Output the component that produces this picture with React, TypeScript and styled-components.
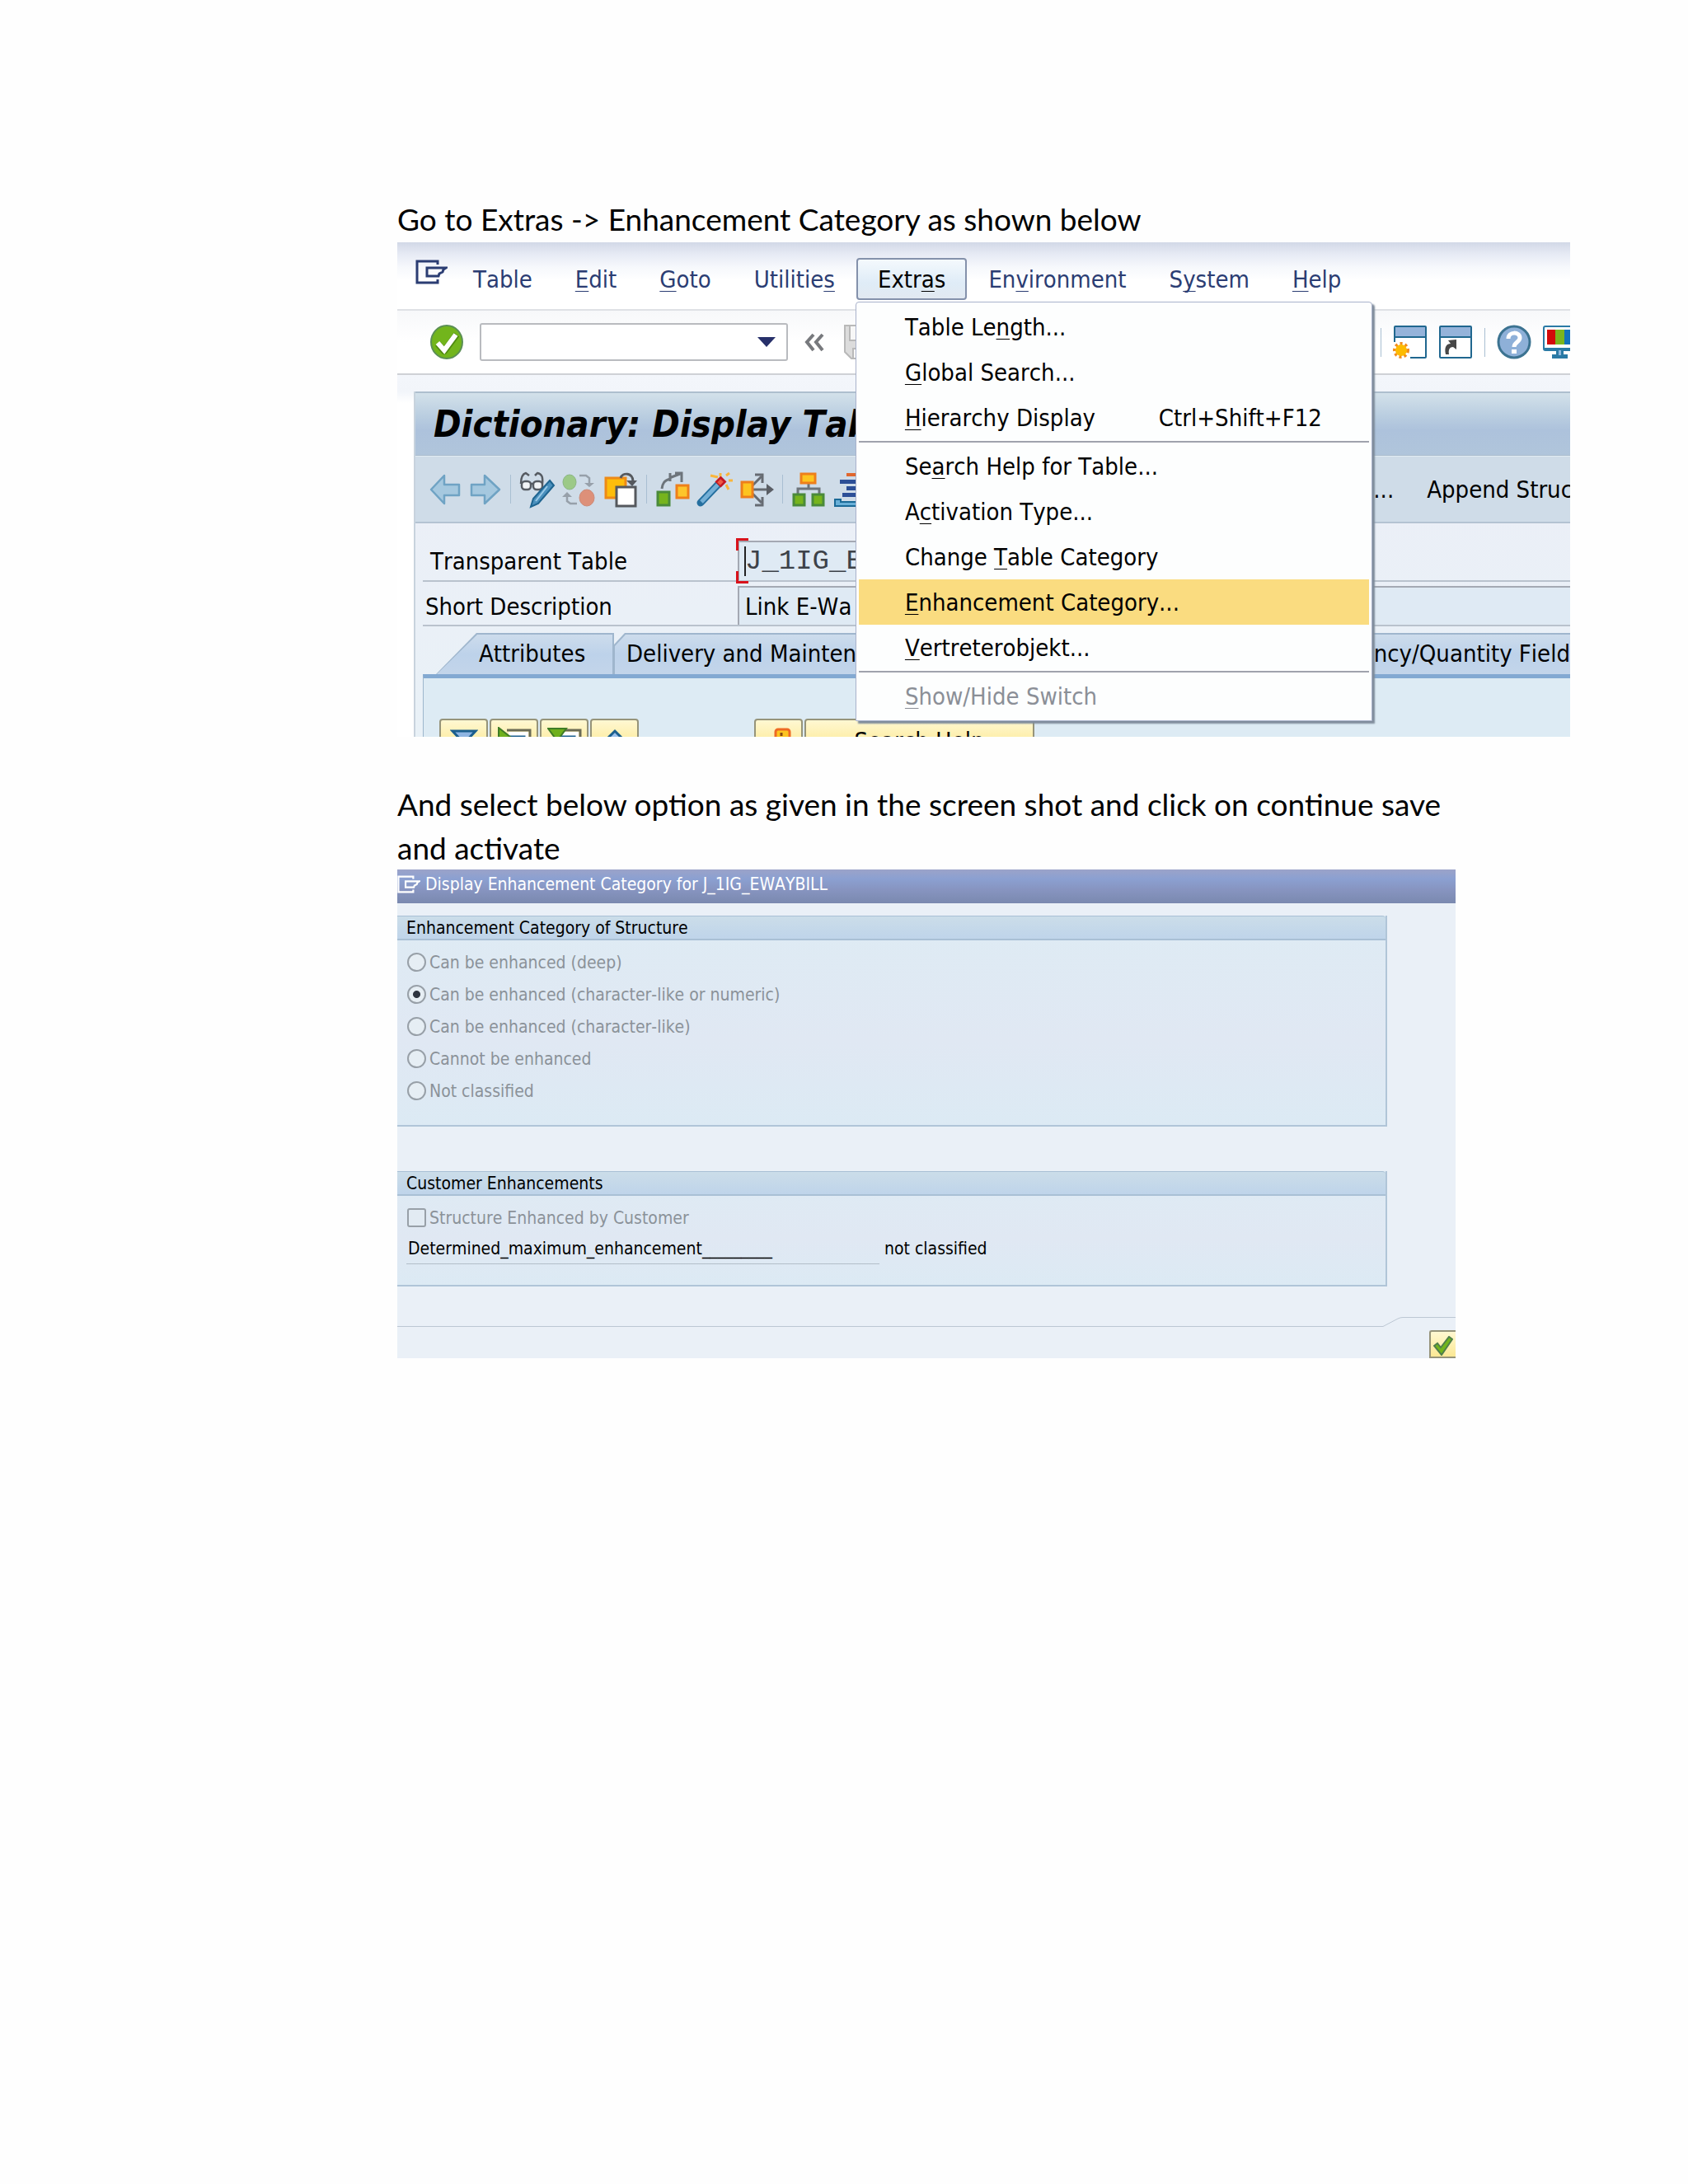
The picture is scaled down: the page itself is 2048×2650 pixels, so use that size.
import React from "react";
import styled, { createGlobalStyle, css } from "styled-components";

const UI_FONT = `"DejaVu Sans Condensed", "Noto Sans", sans-serif`;

const GlobalStyle = createGlobalStyle`
  *, *::before, *::after { box-sizing: border-box; }
  body { margin: 0; background: #fefefe; color: #000; font-family: ${UI_FONT}; font-kerning: none; }
  button, input { font: inherit; font-kerning: inherit; color: inherit; margin: 0; }
  button { padding: 0; border: 0; background: none; text-align: left; white-space: nowrap; }
`;

/* ---------- document ---------- */

const Page = styled.main`
  padding: 239px 143px 200px 482px;
`;

const Paragraph = styled.p`
  margin: 0;
  font-family: Lato, "Open Sans", sans-serif;
  font-size: 37px;
  font-kerning: normal;
  line-height: 53px;
`;

const Step = styled.section<{ $inset?: boolean }>`
  margin-right: ${(p) => (p.$inset ? "139px" : "0")};
  & + & { margin-top: 55px; }
`;

/* ---------- first window ---------- */

const Screen = styled.div`
  position: relative;
  overflow: hidden;
  margin-top: 2px;
  font-size: 29px;
  line-height: 36px;
  background: #fff;
`;

const MenuBar = styled.nav`
  display: flex;
  align-items: center;
  height: 83px;
  padding: 8px 0 0 22px;
  border-bottom: 2px solid #dfe1e5;
  background: linear-gradient(#d2d8e7 0, #e6eaf4 14px, #f6f8fc 30px, #fff 46px);
`;

const Session = styled.svg<{ $small?: boolean }>`
  flex: none;
  width: ${(p) => (p.$small ? 28 : 39)}px;
  height: ${(p) => (p.$small ? 22 : 30)}px;
  margin: ${(p) => (p.$small ? "0" : "0 5px 18px 0")};
  fill: none;
  stroke: ${(p) => (p.$small ? "#fff" : "#2b3d73")};
  stroke-width: 3;
`;

const MenuSlot = styled.div`
  position: relative;
`;

const MenuButton = styled.button<{ $open?: boolean }>`
  display: block;
  height: 51px;
  padding: 0 26px;
  color: #2b3d73;
  ${(p) =>
    p.$open &&
    css`
      color: #000;
      border: 2px solid #8491ab;
      border-radius: 4px;
      padding: 0 24px;
      background: linear-gradient(#f4f9fd, #dfecf7 60%, #e2e9f1);
    `}
`;

const Key = styled.span`
  text-decoration: underline;
  text-decoration-thickness: 1px;
  text-underline-offset: 4px;
  text-decoration-skip-ink: none;
`;

const Popup = styled.div`
  position: absolute;
  z-index: 2;
  top: 53px;
  left: -1px;
  width: 627px;
  padding: 2px 3px;
  border: 1px solid #a9b2cb;
  border-radius: 4px 4px 0 0;
  background: #fdfefe;
  box-shadow: 3px 3px 2px #7f8c9b;
`;

const PopupItem = styled.button<{ $active?: boolean }>`
  display: flex;
  align-items: center;
  width: 100%;
  height: 55px;
  padding-left: 56px;
  background: ${(p) => (p.$active ? "#fadc80" : "transparent")};
  &:disabled { color: #8b8f97; }
`;

const Shortcut = styled.span`
  margin-left: auto;
  padding-right: 57px;
`;

const Divider = styled.hr`
  height: 2px;
  margin: 1px 0;
  border: 0;
  background: #a0a3ad;
`;

const CommandBar = styled.div`
  display: flex;
  align-items: center;
  height: 78px;
  padding-left: 40px;
  border-bottom: 2px solid #cfd1d6;
  background: linear-gradient(#f7f8fa, #fff 50%);
`;

const IconButton = styled.button<{ $size?: number }>`
  flex: none;
  display: block;
  width: ${(p) => p.$size ?? 40}px;
  height: 42px;
  svg { display: block; width: 100%; height: 100%; overflow: visible; }
`;

const CommandField = styled.div`
  display: flex;
  align-items: center;
  flex: none;
  width: 374px;
  height: 46px;
  margin: 0 19px 0 20px;
  padding-right: 12px;
  border: 2px solid #b9bbbf;
  border-radius: 3px;
  background: #fff;
`;

const CommandInput = styled.input`
  flex: 1;
  min-width: 0;
  height: 100%;
  border: 0;
  background: none;
`;

const ToolsLeft = styled.div`
  display: flex;
  gap: 23px;
`;

const ToolsRight = styled.div`
  display: flex;
  align-items: center;
  gap: 15px;
  margin-left: auto;
  margin-right: -7px;
`;

const Rule = styled.span`
  flex: none;
  width: 1px;
  height: 35px;
  background: #a9bfd2;
`;

const WindowArea = styled.div`
  padding: 20px 0 0 20px;
  background: linear-gradient(#f3f6fb 0, #f2f5fa 20px, #fff 34px);
`;

const AppWindow = styled.div`
  border-left: 2px solid #c8d3dd;
  background: linear-gradient(#e9f3f5, #ebeff7 30%, #e9f1f7);
`;

const TitleBar = styled.h1`
  margin: 0;
  height: 78px;
  padding-left: 22px;
  border-top: 2px solid #aebfce;
  border-bottom: 1px solid #a9bccd;
  background: linear-gradient(#d3e1ea, #b9cde0 38%, #adc2dc 60%, #b0c5db);
  font-size: 45px;
  font-style: italic;
  font-weight: 700;
  line-height: 75px;
  white-space: nowrap;
`;

const AppToolbar = styled.div`
  display: flex;
  align-items: center;
  gap: 11px;
  height: 82px;
  padding-left: 17px;
  border-top: 1px solid #e2ecf3;
  border-bottom: 2px solid #b4c3d2;
  background: #cfdce8;
`;

const ToolbarText = styled.div`
  display: flex;
  gap: 40px;
  margin-left: auto;
  margin-right: -3px;
`;

const FormRow = styled.div<{ $first?: boolean }>`
  display: flex;
  height: ${(p) => (p.$first ? 50 : 49)}px;
  margin: ${(p) => (p.$first ? 21 : 5)}px 0 0 9px;
  border-bottom: 2px solid #b9c2cd;
`;

const FormLabel = styled.label<{ $indent: number }>`
  flex: none;
  width: 382px;
  padding-left: ${(p) => p.$indent}px;
  line-height: 50px;
`;

const FieldBox = styled.div<{ $wide?: boolean }>`
  position: relative;
  ${(p) => (p.$wide ? "flex: 1;" : "width: 420px;")}
  border-top: 2px solid #a4a9b3;
  border-left: 2px solid #a4a9b3;
  background: #dfeaf4;
`;

const FieldInput = styled.input<{ $mono?: boolean }>`
  display: block;
  width: 100%;
  height: 100%;
  padding: 0 0 0 7px;
  border: 0;
  outline: 0;
  background: none;
  ${(p) =>
    p.$mono &&
    css`
      font-family: "Liberation Mono", monospace;
      font-size: 34px;
      color: #3d4249;
    `}
`;

const Bracket = styled.span<{ $bottom?: boolean }>`
  position: absolute;
  left: -4px;
  ${(p) => (p.$bottom ? "bottom: -4px; border-bottom: 3px solid #d8121b;" : "top: -5px; border-top: 3px solid #d8121b;")}
  width: 15px;
  height: 15px;
  border-left: 3px solid #d8121b;
`;

const Caret = styled.span`
  position: absolute;
  top: 5px;
  bottom: 5px;
  left: 6px;
  width: 2px;
  background: #222;
`;

const Tabs = styled.div`
  display: flex;
  height: 50px;
  margin: 8px 0 0 25px;
`;

const Tab = styled.button<{ $kind: "first" | "middle" | "last" }>`
  position: relative;
  isolation: isolate;
  line-height: 50px;
  background: #9fb6cd;
  &, &::before {
    clip-path: ${(p) =>
      p.$kind === "first"
        ? "polygon(49px 0, 100% 0, 100% 100%, 0 100%)"
        : p.$kind === "middle"
        ? "polygon(0 14px, 13px 0, 100% 0, 100% 100%, 0 100%)"
        : "none"};
  }
  &::before {
    content: "";
    position: absolute;
    z-index: -1;
    inset: 2px 2px 0 1px;
    background: linear-gradient(#cddcec, #bdd2ea 50%, #c3d5ea);
  }
  ${(p) => p.$kind === "first" && "width: 216px; padding-left: 52px;"}
  ${(p) => p.$kind === "middle" && "flex: 1; min-width: 0; padding-left: 15px;"}
  ${(p) => p.$kind === "last" && "&::before { inset: 2px 0 0 0; }"}
`;

const TabPanel = styled.div`
  display: flex;
  height: 76px;
  margin-left: 9px;
  padding: 49px 0 0 19px;
  border-top: 5px solid #83a9d2;
  border-left: 1px solid #9db6cc;
  background: #ddebf4;
  overflow: hidden;
`;

const YellowButton = styled.button<{ $wide?: boolean }>`
  flex: none;
  display: block;
  width: ${(p) => (p.$wide ? 279 : 59)}px;
  height: 54px;
  margin-right: 2px;
  border: 2px solid #96947a;
  border-radius: 4px;
  background: linear-gradient(#fff8d2, #fcea9b 60%);
  text-align: center;
  line-height: 50px;
  svg { display: block; margin: 5px auto 0; }
`;

const ButtonGroup = styled.div`
  display: flex;
  margin-right: 138px;
`;

/* ---------- second window ---------- */

const Dialog = styled.div`
  overflow: hidden;
  background: #eaf0f7;
  font-size: 21px;
  line-height: 28px;
`;

const DialogTitle = styled.h2`
  display: flex;
  align-items: center;
  gap: 6px;
  height: 41px;
  margin: 0 0 15px;
  padding-bottom: 6px;
  background: linear-gradient(#9ba3c9, #8ba0d1 28%, #8794c0 60%, #7a89af);
  color: #fff;
  font-size: 21px;
  font-weight: 400;
`;

const Group = styled.fieldset<{ $height: number }>`
  min-width: 0;
  height: ${(p) => p.$height}px;
  margin: 0 83px 0 0;
  padding: 0;
  border: solid #b0c5d8;
  border-width: 0 2px 2px 0;
  background: linear-gradient(#deebf4, #e0e8f3 60%, #dceaf4);
  & + & { margin-top: 54px; }
`;

const Legend = styled.legend`
  float: left;
  width: 100%;
  height: 30px;
  margin-bottom: 7px;
  padding: 0 0 0 11px;
  border: solid #a9c0d5;
  border-width: 1px 0 2px;
  border-radius: 0 4px 0 0;
  background: linear-gradient(#cbdde9, #bfd4ea);
`;

const Choice = styled.label`
  clear: both;
  display: flex;
  align-items: center;
  gap: 4px;
  height: 39px;
  padding-left: 12px;
  color: #8b9299;
`;

const Radio = styled.input`
  appearance: none;
  width: 23px;
  height: 23px;
  border: 2px solid #98a0a8;
  border-radius: 50%;
  background: #e6eef4;
  &:checked { background: radial-gradient(circle, #2d3440 0 4px, #e6eef4 5px); }
`;

const Check = styled.input`
  appearance: none;
  width: 23px;
  height: 23px;
  border: 2px solid #98a0a8;
  border-radius: 3px;
  background: #e2ebf3;
`;

const Result = styled.div`
  display: flex;
  height: 37px;
  padding-left: 11px;
`;

const ResultLabel = styled.span`
  width: 574px;
  margin-right: 6px;
  padding: 4px 0 0 2px;
  border-bottom: 1px solid #b3bec9;
`;

const ResultValue = styled.span`
  padding-top: 4px;
`;

const Footer = styled.div`
  display: flex;
  height: 50px;
  margin-top: 37px;
`;

const FooterLine = styled.div`
  flex: 1;
  height: 12px;
  border-bottom: 1px solid #bcc7d3;
`;

const FooterSlope = styled.svg`
  width: 24px;
  height: 12px;
`;

const FooterEnd = styled.div`
  width: 64px;
  padding: 15px 0 0 32px;
  border-top: 1px solid #bcc7d3;
`;

const Continue = styled.button`
  display: block;
  width: 32px;
  height: 34px;
  border: 2px solid #96947a;
  border-right: 0;
  border-radius: 3px 0 0 0;
  background: linear-gradient(#fff8d2, #fbe894);
  svg { display: block; margin: 4px 0 0 3px; }
`;

/* ---------- drawings ---------- */

const SessionGlyph = ({ small }: { small?: boolean }) => (
  <Session $small={small} viewBox="0 0 39 30" aria-hidden="true">
    <path d="M27 6V2H2v26h25v-4" />
    <path d="M37 10H14v10h14l1-3 4-2 1-3z" />
  </Session>
);

const OkIcon = () => (
  <svg viewBox="0 0 40 42">
    <ellipse cx="20" cy="21" rx="19" ry="20" fill="#72b51c" stroke="#5b8f55" strokeWidth="2" />
    <path d="M9 23l8 9 15-20" fill="none" stroke="#4f8a10" strokeWidth="8" strokeLinejoin="round" />
    <path d="M9 22l8 9 14-19" fill="none" stroke="#fff" strokeWidth="6" />
  </svg>
);

const DropIcon = () => (
  <svg viewBox="0 0 24 42"><path d="M1 15h22L12 27z" fill="#27306a" /></svg>
);

const RewindIcon = () => (
  <svg viewBox="0 0 26 42" fill="none" stroke="#77797d" strokeWidth="4">
    <path d="M12 12L4 21l8 10M23 12l-8 9 8 10" />
  </svg>
);

const SaveIcon = () => (
  <svg viewBox="0 0 40 42" stroke="#b9b9b9" strokeWidth="2">
    <path d="M1 1h38v40H9l-8-8z" fill="#dcdcdc" />
    <path d="M7 1h26v18H7zM11 29h20v12H11z" fill="#f7f7f7" />
  </svg>
);

const WindowShape = ({ children }: { children: React.ReactNode }) => (
  <svg viewBox="0 0 40 42">
    <rect x="1" y="2" width="38" height="38" rx="1" fill="#fff" stroke="#20678f" strokeWidth="2" />
    <rect x="2" y="3" width="36" height="11" fill="#95b3da" />
    <path d="M1 15h38" stroke="#20678f" strokeWidth="2" />
    {children}
  </svg>
);

const NewSessionIcon = () => (
  <WindowShape>
    <path d="M-1 21h11l10 10v11H-1z" fill="#fff" />
    <circle cx="9" cy="31" r="8" fill="none" stroke="#f28c1c" strokeWidth="4" strokeDasharray="3 3" />
    <circle cx="9" cy="31" r="7" fill="#fdbb00" />
  </WindowShape>
);

const ShortcutIcon = () => (
  <WindowShape>
    <path d="M8 36c-2-9 1-13 6-13l-3-4 10-1v12l-4-3c-4 0-6 3-5 9z" fill="#474747" />
  </WindowShape>
);

const HelpIcon = () => (
  <svg viewBox="0 0 40 42">
    <circle cx="20" cy="21" r="19" fill="#8eb0d8" stroke="#3c7391" strokeWidth="3" />
    <path d="M13 17c0-9 14-9 14-1 0 5-7 5-7 11" fill="none" stroke="#fff" strokeWidth="5" />
    <rect x="17" y="30" width="6" height="5" fill="#fff" />
  </svg>
);

const MonitorIcon = () => (
  <svg viewBox="0 0 40 42">
    <rect x="1" y="2" width="38" height="29" rx="2" fill="#fff" stroke="#2a7aa5" strokeWidth="2" />
    <rect x="5" y="6" width="10" height="18" fill="#d30a0a" />
    <rect x="15" y="6" width="11" height="18" fill="#7ab51d" />
    <rect x="26" y="6" width="10" height="18" fill="#1272bb" />
    <path d="M2 28h36v3H25v5h5v5H11v-5h5v-5H2z" fill="#2a7aa5" />
    <path d="M19 31h3v6h-3z" fill="#8fb8dd" />
  </svg>
);

const ArrowIcon = ({ right }: { right?: boolean }) => (
  <svg viewBox="0 0 38 42">
    <path
      d={right ? "M2 15h16V4l18 17-18 17V28H2z" : "M36 15H18V4L2 21l16 17V28h18z"}
      fill="#a5c8df"
      stroke="#6fa3c4"
      strokeWidth="2.5"
      strokeLinejoin="round"
    />
  </svg>
);

const GlassesIcon = () => (
  <svg viewBox="0 0 40 42" fill="none">
    <g stroke="#565b62" strokeWidth="2.5">
      <path d="M1 14C1 5 3 2 7 1l4 3M27 14c1-9-1-12-6-13l-3 3" />
      <rect x="2" y="11" width="11" height="10" rx="4" fill="#f2f4f6" />
      <rect x="16" y="11" width="11" height="10" rx="4" fill="#f2f4f6" />
      <path d="M12 14h5" />
    </g>
    <path d="M36 10l5 6-19 22-9 4 3-10z" fill="#4a90bd" stroke="#1e6490" strokeWidth="2" />
    <path d="M33 17L19 35" stroke="#9ccbe8" strokeWidth="2" />
  </svg>
);

const ToggleIcon = () => (
  <svg viewBox="0 0 40 42" fill="none">
    <ellipse cx="9" cy="12" rx="8" ry="9" fill="#9cc987" stroke="#8bb683" />
    <ellipse cx="30" cy="31" rx="9" ry="10" fill="#dd9079" stroke="#cc8a78" />
    <path d="M21 4h8l4 3v9M18 38h-8l-4-3v-9" stroke="#97a0aa" strokeWidth="2.5" />
    <path d="M27 13h12l-6 5zM0 30h12l-6-6z" fill="#97a0aa" />
  </svg>
);

const CopyIcon = () => (
  <svg viewBox="0 0 40 42">
    <path d="M2 7h24v24H2z" fill="#fdbd0b" stroke="#ee8a16" strokeWidth="3" />
    <path d="M20 7c2-7 15-7 15 4" fill="none" stroke="#55585d" strokeWidth="3" />
    <path d="M27 10h13l-6 7z" fill="#55585d" />
    <rect x="15" y="18" width="23" height="23" fill="#fff" stroke="#55585d" strokeWidth="3" />
  </svg>
);

const WhereUsedIcon = () => (
  <svg viewBox="0 0 40 42" fill="none">
    <path d="M7 20c1-7 3-10 10-12M17 1v10M16 7l13-5M31 12V1h-8" stroke="#6d747b" strokeWidth="3" />
    <rect x="2" y="24" width="14" height="16" fill="#76b41d" stroke="#4a8a3a" strokeWidth="3" />
    <rect x="25" y="16" width="14" height="15" fill="#fdc52b" stroke="#ee7f1a" strokeWidth="3" />
  </svg>
);

const WandIcon = () => (
  <svg viewBox="0 0 40 42" fill="none">
    <path d="M3 37L26 13" stroke="#256f9f" strokeWidth="9" strokeLinecap="round" />
    <path d="M4 36L24 15" stroke="#74afd6" strokeWidth="5" />
    <path d="M24 15l7-7" stroke="#c41721" strokeWidth="10" />
    <path d="M25 14l4-4" stroke="#ee5a45" strokeWidth="5" />
    <path d="M15 4l9 2M27 5V1M34 4l4-3M37 10h5M34 15l3 6" stroke="#f9b53c" strokeWidth="3" />
  </svg>
);

const ExpandIcon = () => (
  <svg viewBox="0 0 40 42" fill="none">
    <path d="M14 17L26 5M14 25l12 12M12 21h24" stroke="#666b72" strokeWidth="3" />
    <path d="M18 3h9v10M18 40h9V30" stroke="#666b72" strokeWidth="3" />
    <path d="M32 14l9 7-9 7z" fill="#5a5e65" />
    <rect x="2" y="12" width="13" height="18" fill="#fdc41f" stroke="#ee7f1a" strokeWidth="3" />
  </svg>
);

const HierarchyIcon = () => (
  <svg viewBox="0 0 40 42" fill="none">
    <path d="M20 12v8M7 28v-8h26v8" stroke="#6d747b" strokeWidth="3" />
    <rect x="11" y="2" width="17" height="11" fill="#fdc41f" stroke="#ee7f1a" strokeWidth="3" />
    <rect x="2" y="27" width="13" height="13" fill="#76b41d" stroke="#4a8a3a" strokeWidth="3" />
    <rect x="25" y="27" width="13" height="13" fill="#76b41d" stroke="#4a8a3a" strokeWidth="3" />
  </svg>
);

const StackIcon = () => (
  <svg viewBox="0 0 40 42">
    <path d="M15 1h25v4H15z" fill="#e0672e" />
    <path d="M7 9h30v5H7zM15 17h25v5H15zM10 25h30v5H10z" fill="#2c4f97" />
    <path d="M1 33h7v3h32v5H1z" fill="#69b0d8" stroke="#1b6a97" strokeWidth="2" />
  </svg>
);

const FilterIcon = () => (
  <svg width="34" height="40" viewBox="0 0 34 40"><path d="M3 5h28L17 20z" fill="#8fb5e3" stroke="#1b5f8e" strokeWidth="3" /></svg>
);

const RowsIcon = ({ down }: { down?: boolean }) => (
  <svg width="42" height="40" viewBox="0 0 42 40" fill="none">
    <path d="M12 4h28v36" stroke="#6b6b55" strokeWidth="3" />
    <path d="M14 6h24v34H14z" fill="#fff" />
    <path d="M17 12h16v28H17z" fill="#a9cdf0" stroke="#1b5f8e" strokeWidth="3" />
    <path d={down ? "M1 2h22L12 17z" : "M2 1l14 11L2 24z"} fill="#6fb01c" stroke="#3f7c26" strokeWidth="2" />
  </svg>
);

const DiamondIcon = () => (
  <svg width="34" height="40" viewBox="0 0 34 40"><path d="M17 5l13 13-13 13L4 18z" fill="#9cc0ea" stroke="#1b5f8e" strokeWidth="3" /></svg>
);

const KeyIcon = () => (
  <svg width="34" height="40" viewBox="0 0 34 40">
    <rect x="13" y="3" width="17" height="12" rx="3" fill="#fdc41f" stroke="#ee6a24" strokeWidth="3" />
    <path d="M20 7v4" stroke="#8a4a10" strokeWidth="3" />
    <path d="M18 15h7v15h-7z" fill="#fdc41f" stroke="#ee6a24" strokeWidth="3" />
  </svg>
);

const TickIcon = () => (
  <svg width="24" height="24" viewBox="0 0 24 24">
    <path d="M1 12l4-3 4 5L19 1l4 3L10 23z" fill="#72b51c" stroke="#4f7f4b" strokeWidth="2" />
  </svg>
);

/* ---------- data ---------- */

type Label = [string, string, string];

const Accel = ({ label: [before, key, after] }: { label: Label }) => (
  <span>
    {before}
    {key && <Key>{key}</Key>}
    {after}
  </span>
);

const menus: Label[] = [
  ["Table", "", ""],
  ["", "E", "dit"],
  ["", "G", "oto"],
  ["Utilitie", "s", ""],
  ["Extr", "a", "s"],
  ["En", "v", "ironment"],
  ["S", "y", "stem"],
  ["", "H", "elp"],
];

type Entry = { label: Label; shortcut?: string; active?: boolean; disabled?: boolean; ruled?: boolean };

const extras: Entry[] = [
  { label: ["Table Le", "n", "gth..."] },
  { label: ["", "G", "lobal Search..."] },
  { label: ["", "H", "ierarchy Display"], shortcut: "Ctrl+Shift+F12" },
  { label: ["Se", "a", "rch Help for Table..."], ruled: true },
  { label: ["A", "c", "tivation Type..."] },
  { label: ["Change ", "T", "able Category"] },
  { label: ["", "E", "nhancement Category..."], active: true },
  { label: ["", "V", "ertreterobjekt..."] },
  { label: ["", "S", "how/Hide Switch"], disabled: true, ruled: true },
];

const categories = [
  "Can be enhanced (deep)",
  "Can be enhanced (character-like or numeric)",
  "Can be enhanced (character-like)",
  "Cannot be enhanced",
  "Not classified",
];

/* ---------- windows ---------- */

const DictionaryScreen = () => (
  <Screen>
    <MenuBar>
      <SessionGlyph />
      {menus.map((label) => {
        const open = label[0] === "Extr";
        return (
          <MenuSlot key={label.join("")}>
            <MenuButton $open={open}>
              <Accel label={label} />
            </MenuButton>
            {open && (
              <Popup>
                {extras.map((e) => (
                  <React.Fragment key={e.label.join("")}>
                    {e.ruled && <Divider />}
                    <PopupItem $active={e.active} disabled={e.disabled}>
                      <Accel label={e.label} />
                      {e.shortcut && <Shortcut>{e.shortcut}</Shortcut>}
                    </PopupItem>
                  </React.Fragment>
                ))}
              </Popup>
            )}
          </MenuSlot>
        );
      })}
    </MenuBar>

    <CommandBar>
      <IconButton aria-label="Enter"><OkIcon /></IconButton>
      <CommandField>
        <CommandInput aria-label="Command" />
        <IconButton $size={24} aria-label="Open list"><DropIcon /></IconButton>
      </CommandField>
      <ToolsLeft>
        <IconButton $size={26} aria-label="Back"><RewindIcon /></IconButton>
        <IconButton aria-label="Save"><SaveIcon /></IconButton>
      </ToolsLeft>
      <ToolsRight>
        <Rule />
        <IconButton aria-label="New session"><NewSessionIcon /></IconButton>
        <IconButton aria-label="Create shortcut"><ShortcutIcon /></IconButton>
        <Rule />
        <IconButton aria-label="Help"><HelpIcon /></IconButton>
        <IconButton aria-label="Layout"><MonitorIcon /></IconButton>
      </ToolsRight>
    </CommandBar>

    <WindowArea>
      <AppWindow>
        <TitleBar>Dictionary: Display Tab</TitleBar>
        <AppToolbar>
          <IconButton $size={38} aria-label="Previous"><ArrowIcon /></IconButton>
          <IconButton $size={38} aria-label="Next"><ArrowIcon right /></IconButton>
          <Rule />
          <IconButton aria-label="Display or change"><GlassesIcon /></IconButton>
          <IconButton aria-label="Active or inactive"><ToggleIcon /></IconButton>
          <IconButton aria-label="Other object"><CopyIcon /></IconButton>
          <Rule />
          <IconButton aria-label="Where-used list"><WhereUsedIcon /></IconButton>
          <IconButton aria-label="Activate"><WandIcon /></IconButton>
          <IconButton aria-label="Expand"><ExpandIcon /></IconButton>
          <Rule />
          <IconButton aria-label="Hierarchy"><HierarchyIcon /></IconButton>
          <IconButton aria-label="Object list"><StackIcon /></IconButton>
          <ToolbarText>
            <button>s...</button>
            <button>Append Struc</button>
          </ToolbarText>
        </AppToolbar>

        <FormRow $first>
          <FormLabel htmlFor="table" $indent={9}>Transparent Table</FormLabel>
          <FieldBox>
            <FieldInput id="table" $mono readOnly defaultValue="J_1IG_E" />
            <Caret />
            <Bracket />
            <Bracket $bottom />
          </FieldBox>
        </FormRow>
        <FormRow>
          <FormLabel htmlFor="description" $indent={3}>Short Description</FormLabel>
          <FieldBox $wide>
            <FieldInput id="description" readOnly defaultValue="Link E-Wa" />
          </FieldBox>
        </FormRow>

        <Tabs>
          <Tab $kind="first">Attributes</Tab>
          <Tab $kind="middle">Delivery and Mainten</Tab>
          <Tab $kind="last">ency/Quantity Field</Tab>
        </Tabs>
        <TabPanel>
          <ButtonGroup>
            <YellowButton aria-label="Filter"><FilterIcon /></YellowButton>
            <YellowButton aria-label="Insert row"><RowsIcon /></YellowButton>
            <YellowButton aria-label="Append row"><RowsIcon down /></YellowButton>
            <YellowButton aria-label="Move"><DiamondIcon /></YellowButton>
          </ButtonGroup>
          <YellowButton aria-label="Key"><KeyIcon /></YellowButton>
          <YellowButton $wide>Search Help</YellowButton>
        </TabPanel>
      </AppWindow>
    </WindowArea>
  </Screen>
);

const EnhancementDialog = () => (
  <Dialog>
    <DialogTitle>
      <SessionGlyph small />
      Display Enhancement Category for J_1IG_EWAYBILL
    </DialogTitle>
    <Group $height={256}>
      <Legend>Enhancement Category of Structure</Legend>
      {categories.map((text, i) => (
        <Choice key={text}>
          <Radio type="radio" name="category" defaultChecked={i === 1} />
          {text}
        </Choice>
      ))}
    </Group>
    <Group $height={140}>
      <Legend>Customer Enhancements</Legend>
      <Choice>
        <Check type="checkbox" />
        Structure Enhanced by Customer
      </Choice>
      <Result>
        <ResultLabel>Determined_maximum_enhancement_________</ResultLabel>
        <ResultValue>not classified</ResultValue>
      </Result>
    </Group>
    <Footer>
      <FooterLine />
      <FooterSlope viewBox="0 0 24 12" fill="none" stroke="#bcc7d3" aria-hidden="true">
        <path d="M0 11.5L18 2Q21 .5 24 .5" />
      </FooterSlope>
      <FooterEnd>
        <Continue aria-label="Continue"><TickIcon /></Continue>
      </FooterEnd>
    </Footer>
  </Dialog>
);

export default function App() {
  return (
    <>
      <GlobalStyle />
      <Page>
        <Step>
          <Paragraph>Go to Extras -&gt; Enhancement Category as shown below</Paragraph>
          <DictionaryScreen />
        </Step>
        <Step $inset>
          <Paragraph>And select below option as given in the screen shot and click on continue save and activate</Paragraph>
          <EnhancementDialog />
        </Step>
      </Page>
    </>
  );
}
